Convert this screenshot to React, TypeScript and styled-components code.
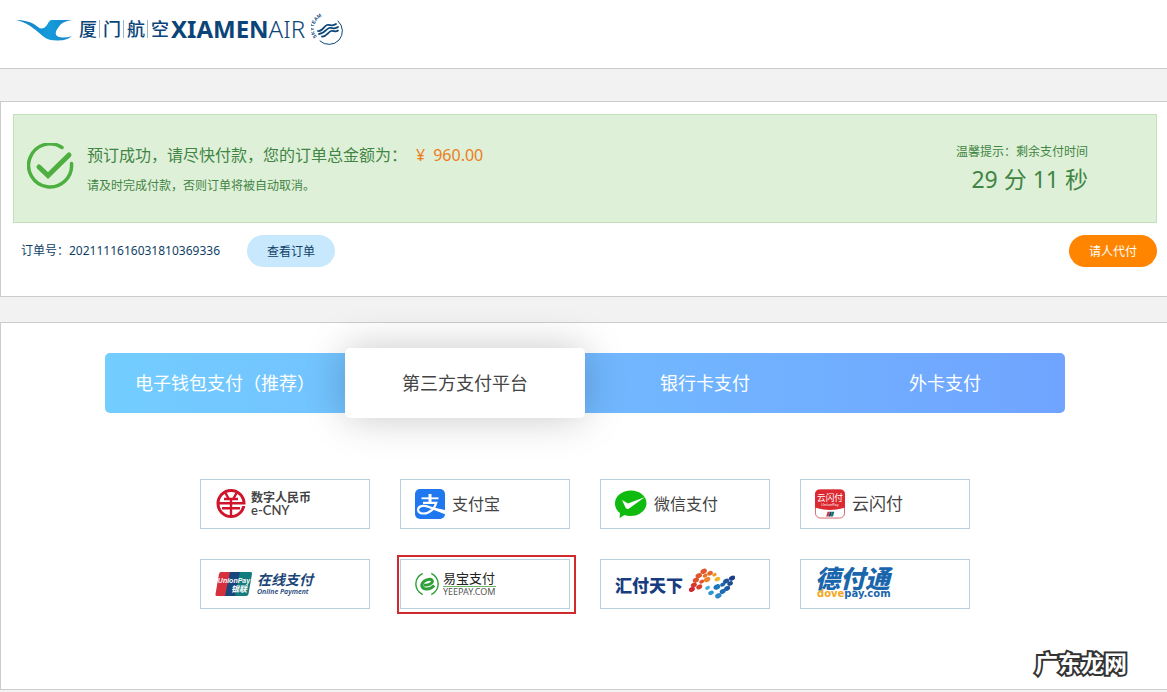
import React, { useState } from "react";
import styled, { createGlobalStyle, css } from "styled-components";

const GlobalStyle = createGlobalStyle`
  * { box-sizing: border-box; }
  body {
    margin: 0;
    background: #f2f2f2;
    color: #0f3f66;
    font-family: "Noto Sans", "Noto Sans CJK SC", sans-serif;
    font-size: 12px;
    line-height: 18px;
  }
  button { font-family: inherit; cursor: pointer; }
`;

const navy = "#0b4578";

const Header = styled.header`
  display: flex;
  align-items: flex-start;
  height: 69px;
  padding: 12px 16px;
  background: #fff;
  border-bottom: 1px solid #ccc;
`;

const Brand = styled.a`
  display: flex;
  align-items: center;
  height: 34px;
  color: ${navy};
  text-decoration: none;
`;

const BrandName = styled.span`
  display: flex;
  font-size: 18px;
  font-weight: 500;
  line-height: 18px;
`;

const BrandGlyph = styled.span`
  padding: 0 2px;
  & + & { border-left: 1px solid #9fb4c8; padding-left: 3px; }
`;

const BrandLatin = styled.span`
  font-family: "Noto Sans", sans-serif;
  font-size: 24px;
  line-height: 34px;
  font-weight: 300;
  margin-right: 6px;
  strong { font-weight: 700; }
`;

const Panel = styled.section`
  background: #fff;
  border: 1px solid #ccc;
  border-right: 0;
`;

const OrderPanel = styled(Panel)`
  margin-top: 32px;
  padding: 12px 10px 29px 12px;
`;

const Notice = styled.div`
  display: flex;
  align-items: center;
  height: 109px;
  padding: 0 68px 4px 13px;
  background: #dff0d8;
  border: 1px solid #c3dfbb;
  color: #3f8544;
`;

const NoticeText = styled.div`
  flex: 1;
  margin-left: 12px;
  padding-top: 4px;
`;

const NoticeTitle = styled.p`
  margin: 0 0 10px;
  font-size: 16px;
  line-height: 24px;
`;

const Price = styled.span`
  margin-left: 9px;
  color: #ec7d1c;
  span { margin-right: 8px; }
`;

const NoticeHint = styled.p`
  margin: 0;
`;

const Countdown = styled.div`
  padding-top: 6px;
  text-align: right;
`;

const Clock = styled.div`
  font-size: 23px;
  line-height: 36px;
`;

const OrderRow = styled.div`
  display: flex;
  align-items: center;
  margin-top: 12px;
  padding-left: 8px;
`;

const Pill = styled.button<{ $primary?: boolean }>`
  width: 88px;
  height: 32px;
  padding: 0;
  border: 0;
  border-radius: 16px;
  font-size: 12px;
  background: ${(p) => (p.$primary ? "#ff8500" : "#c7e8fd")};
  color: ${(p) => (p.$primary ? "#fff" : "#0f3f66")};
  margin-left: ${(p) => (p.$primary ? "auto" : "27px")};
`;

const PayPanel = styled(Panel)`
  position: relative;
  margin-top: 25px;
  margin-bottom: 2px;
  padding: 30px 0 80px 2px;
`;

const Tabs = styled.div`
  display: flex;
  align-items: center;
  max-width: 960px;
  height: 60px;
  margin: 0 auto;
  border-radius: 5px;
  background: linear-gradient(90deg, #73cdff, #70a4ff);
`;

const Tab = styled.button<{ $active: boolean }>`
  flex: 1;
  height: 60px;
  padding: 0;
  border: 0;
  background: none;
  color: #fff;
  font-size: 18px;
  line-height: 24px;
  ${(p) =>
    p.$active &&
    css`
      height: 70px;
      background: #fff;
      color: #444;
      border-radius: 5px;
      box-shadow: 0 0 40px rgba(0, 0, 0, 0.22);
    `}
`;

const Methods = styled.div`
  display: grid;
  grid-template-columns: repeat(auto-fit, 170px);
  gap: 30px;
  justify-content: center;
  max-width: 770px;
  margin: 66px auto 0;
`;

const Method = styled.button<{ $marked?: boolean }>`
  position: relative;
  display: flex;
  align-items: center;
  gap: 4px;
  height: 50px;
  padding: 0 0 0 14px;
  background: #fff;
  border: 1px solid #b9cfdb;
  text-align: left;
  ${(p) =>
    p.$marked &&
    css`
      &::after {
        content: "";
        position: absolute;
        inset: -5px -7px -6px -4px;
        border: 2px solid #cf2a2c;
      }
    `}
`;

const Label = styled.span<{ $size: number }>`
  padding-left: 3px;
  font-size: ${(p) => p.$size}px;
  line-height: 24px;
  color: #444;
`;

const Stack = styled.span`
  display: flex;
  flex-direction: column;
`;

const CnyName = styled.span`
  font-size: 12px;
  line-height: 12px;
  font-weight: 700;
  color: #444;
`;

const CnyLatin = styled.span`
  font-size: 13px;
  line-height: 12px;
  font-weight: 600;
  font-family: Lato, sans-serif;
  color: #444;
`;

const OnlineName = styled.span`
  font-size: 14px;
  line-height: 15px;
  font-weight: 700;
  font-style: italic;
  color: #1c4678;
`;

const OnlineLatin = styled.span`
  font-size: 7px;
  line-height: 9px;
  font-weight: 600;
  font-style: italic;
  color: #1c4678;
`;

const YeeName = styled.span`
  font-size: 13px;
  line-height: 15px;
  color: #222;
  border-bottom: 1px solid #6ab56b;
`;

const YeeLatin = styled.span`
  font-size: 9px;
  line-height: 10px;
  color: #555;
`;

const HuifuName = styled.span`
  padding-top: 3px;
  font-size: 17px;
  line-height: 24px;
  font-weight: 900;
  color: #173d80;
`;

const DoveName = styled.span`
  font-size: 25px;
  line-height: 20px;
  font-weight: 900;
  font-style: italic;
  color: #1a66ad;
`;

const DoveLatin = styled.span`
  padding-left: 2px;
  font-family: "DejaVu Sans", sans-serif;
  font-size: 10px;
  line-height: 12px;
  font-weight: 700;
  color: #1a66ad;
  em { color: #f2a81d; font-style: normal; }
`;

const Watermark = styled.span`
  position: absolute;
  right: 40px;
  bottom: 10px;
  font-size: 23px;
  line-height: 32px;
  font-weight: 700;
  color: #fff;
  -webkit-text-stroke: 4px #333;
  paint-order: stroke fill;
`;

const EgretMark = () => (
  <svg width="61" height="34" viewBox="0 0 61 34" aria-hidden="true">
    <defs>
      <linearGradient id="egret" x1="0" x2="1">
        <stop offset="0" stopColor="#127dc0" />
        <stop offset="0.6" stopColor="#159bdc" />
        <stop offset="1" stopColor="#1685c6" />
      </linearGradient>
    </defs>
    <path
      d="M0 8C9 8 16 10 22 15C25 17.500 28 17 31 13C33 10 33 8 37 8H56C49 9 45 11 42 16C38 21 39 25.500 47 25.500C50 25.500 53 25 56 24C51 28 46 28.500 41 28.500C31 28.500 28 25 22 20C15 14 9 10 0 8Z"
      fill="url(#egret)"
    />
  </svg>
);

const SkyTeamMark = () => (
  <svg width="34" height="36" viewBox="0 0 34 36" aria-hidden="true">
    <defs>
      <path id="ring" d="M6 26A11.500 11.500 0 0 1 26 9" />
    </defs>
    <text fontSize="5" fontWeight="700" fill={navy} fontFamily="Liberation Sans, sans-serif">
      <textPath href="#ring">SKYTEAM</textPath>
    </text>
    <g fill="none" stroke={navy} strokeLinecap="round">
      <path d="M27 10A13 13 0 0 1 9 30" strokeWidth="1" />
      <path d="M7 20C11 21 13 15 16 14S21 16 25 13" strokeWidth="1.800" />
      <path d="M8 23C13 23 15 18 18 17S23 19 27 16" strokeWidth="1.800" />
      <path d="M11 25.500C15 26 17 21 20 20S24 22 27 19.500" strokeWidth="1.800" />
    </g>
  </svg>
);

const SuccessMark = () => (
  <svg width="48" height="48" viewBox="0 0 48 48" aria-hidden="true">
    <g fill="none" stroke="#4caf3f" strokeLinecap="round">
      <path d="M35 4.500A21.500 21.500 0 1 0 44.500 20.500" strokeWidth="3.500" />
      <path d="M12 24L21 32.500L42 12" strokeWidth="5" />
    </g>
  </svg>
);

const CnyMark = () => (
  <svg width="32" height="30" viewBox="0 0 32 30" aria-hidden="true">
    <circle cx="16" cy="14.500" r="13" fill="none" stroke="#d0142c" strokeWidth="3" />
    <g fill="none" stroke="#d0142c" strokeWidth="2.400">
      <path d="M10.500 4L13.500 9.500M21.500 4L18.500 9.500" />
      <path d="M9 10H23M2 14.300H30M7 19.300H25M16 10V26" />
    </g>
    <path d="M27 16.300H31" stroke="#fff" strokeWidth="1.500" />
  </svg>
);

const AlipayMark = () => (
  <svg width="30" height="30" viewBox="0 0 30 30" aria-hidden="true">
    <rect width="30" height="30" rx="5" fill="#1f78f0" />
    <g fill="none" stroke="#fff">
      <path d="M6.500 9.300H23.500" strokeWidth="1.900" />
      <path d="M15 5V13.500" strokeWidth="3" />
      <path d="M8 13.800H21.300C20 19 15 24.500 8.500 24.500C4 24.500 2.500 22 3.300 19.500C4.500 16.500 9.500 16 14 18L30 24" strokeWidth="2.200" />
    </g>
    <path d="M16 18L30 21V25L18 20Z" fill="#fff" />
  </svg>
);

const WechatMark = () => (
  <svg width="32" height="30" viewBox="1 0 32 30" aria-hidden="true">
    <path d="M17 1.500C25.500 1.500 32.500 7 32.500 14S25.500 27 17 27C14.500 27 12.500 26.600 10.500 26L5.500 29L6 24C2.500 21.500 1 18 1 14.500C1 7 8 1.500 17 1.500Z" fill="#10bb10" />
    <path d="M8 11L14 14.500L31 8L15 19.500C13.500 20.500 12.500 20 11.500 18.500Z" fill="#fff" />
  </svg>
);

const QuickPassMark = () => (
  <svg width="30" height="30" viewBox="0 0 31 30" aria-hidden="true">
    <rect x="0.500" y="0.500" width="30" height="29" rx="5" fill="#fff" stroke="#d5666a" />
    <path d="M5 0H26Q31 0 31 5V18.500Q15.500 24 0 18.500V5Q0 0 5 0Z" fill="#dc2830" />
    <text x="15.500" y="12" textAnchor="middle" fontSize="9" fill="#fff" fontFamily="Noto Sans CJK SC, sans-serif">云闪付</text>
    <text x="15.500" y="17.500" textAnchor="middle" fontSize="4" fill="#fff" fontFamily="Noto Sans, sans-serif">UnionPay</text>
    <path d="M13 23H15.500L14 28H11.500Z" fill="#d8343c" />
    <path d="M15.500 23H17.500L16 28H14Z" fill="#17406e" />
    <path d="M17.500 23H20L18.500 28H16Z" fill="#17716e" />
  </svg>
);

const UnionPayMark = () => (
  <svg width="38" height="26" viewBox="0 0 38 26" aria-hidden="true">
    <path d="M6 1H16L11 25H2Q0 25 0.500 23L4 3Q4.500 1 6 1Z" fill="#d5303b" />
    <path d="M15 1H26L21 25H10Z" fill="#17477d" />
    <path d="M25 1H35.500Q37.500 1 37 3L33.500 23Q33 25 31 25H20Z" fill="#137c7c" />
    <text x="19" y="12" textAnchor="middle" fontSize="7" fontWeight="700" fontStyle="italic" fill="#fff" fontFamily="Liberation Sans, sans-serif">UnionPay</text>
    <text x="24" y="21" textAnchor="middle" fontSize="8" fontWeight="700" fontStyle="italic" fill="#fff" fontFamily="Noto Sans CJK SC, sans-serif">银联</text>
  </svg>
);

const YeepayMark = () => (
  <svg width="24" height="26" viewBox="0 0 25 26" aria-hidden="true">
    <g fill="none" stroke="#2f9f3a">
      <path d="M8 2C-1.500 7 -1.500 19 8 24" strokeWidth="1.500" />
      <path d="M17 2C26.500 7 26.500 19 17 24" strokeWidth="1.500" />
      <path d="M9 14C14 15 19 12 18 9.500C16.500 6.500 8 9 7 14C6.500 19 15 20 20 14.500" strokeWidth="3" />
    </g>
  </svg>
);

const huifuDots: [number, number, number, string][] = [
  [16, 3, 3.4, "#e2562b"], [22.5, 5, 3, "#e2662b"], [11, 7.5, 3.4, "#e0552b"], [17.5, 7.5, 2.6, "#e8702a"],
  [8, 12, 3.3, "#e0502b"], [14, 13.5, 2.6, "#e2562b"], [19.5, 11.5, 3.4, "#ee8429"],
  [6, 17, 3.2, "#d8352c"], [11.5, 19, 3.2, "#dd3c2b"], [4, 21.5, 3.2, "#cf2830"],
  [27, 6.5, 2.4, "#f09a28"], [30, 11, 3, "#f0b62a"], [20, 20, 2.6, "#45aee0"],
  [23.5, 25, 3, "#2f95d2"], [29.5, 19, 3.6, "#1b78bd"], [31, 28, 3.4, "#2b88c9"],
  [35.5, 16.5, 2.8, "#1d66ae"], [39, 13, 3.2, "#1c5399"], [45, 10, 3.4, "#1b3f86"],
  [43, 15.5, 3, "#1c4b92"], [40, 20.5, 3.2, "#1c5ba4"], [35.5, 23.5, 3.2, "#1f6cb4"],
];

const HuifuMark = () => (
  <svg width="48" height="32" viewBox="-1 0 49 32" aria-hidden="true">
    {huifuDots.map(([x, y, r, fill]) => (
      <ellipse key={`${x}-${y}`} cx={x} cy={y} rx={r} ry={r * 0.72} fill={fill} transform={`rotate(-25 ${x} ${y})`} />
    ))}
  </svg>
);

const tabs = ["电子钱包支付（推荐）", "第三方支付平台", "银行卡支付", "外卡支付"];

export default function App() {
  const [active, setActive] = useState(1);

  return (
    <>
      <GlobalStyle />
      <Header>
        <Brand href="#">
          <EgretMark />
          <BrandName>
            {["厦", "门", "航", "空"].map((c) => (
              <BrandGlyph key={c}>{c}</BrandGlyph>
            ))}
          </BrandName>
          <BrandLatin>
            <strong>XIAMEN</strong>AIR
          </BrandLatin>
          <SkyTeamMark />
        </Brand>
      </Header>
      <main>
        <OrderPanel>
          <Notice>
            <SuccessMark />
            <NoticeText>
              <NoticeTitle>
                预订成功，请尽快付款，您的订单总金额为：
                <Price>
                  <span>¥</span>960.00
                </Price>
              </NoticeTitle>
              <NoticeHint>请及时完成付款，否则订单将被自动取消。</NoticeHint>
            </NoticeText>
            <Countdown>
              温馨提示：剩余支付时间
              <Clock>29 分 11 秒</Clock>
            </Countdown>
          </Notice>
          <OrderRow>
            <span>订单号：2021111616031810369336</span>
            <Pill type="button">查看订单</Pill>
            <Pill type="button" $primary>请人代付</Pill>
          </OrderRow>
        </OrderPanel>
        <PayPanel>
          <Tabs role="tablist">
            {tabs.map((name, i) => (
              <Tab key={name} type="button" role="tab" aria-selected={i === active} $active={i === active} onClick={() => setActive(i)}>
                {name}
              </Tab>
            ))}
          </Tabs>
          <Methods>
            <Method type="button">
              <CnyMark />
              <Stack>
                <CnyName>数字人民币</CnyName>
                <CnyLatin>e-CNY</CnyLatin>
              </Stack>
            </Method>
            <Method type="button">
              <AlipayMark />
              <Label $size={16}>支付宝</Label>
            </Method>
            <Method type="button">
              <WechatMark />
              <Label $size={16}>微信支付</Label>
            </Method>
            <Method type="button">
              <QuickPassMark />
              <Label $size={17}>云闪付</Label>
            </Method>
            <Method type="button">
              <UnionPayMark />
              <Stack>
                <OnlineName>在线支付</OnlineName>
                <OnlineLatin>Online Payment</OnlineLatin>
              </Stack>
            </Method>
            <Method type="button" $marked>
              <YeepayMark />
              <Stack>
                <YeeName>易宝支付</YeeName>
                <YeeLatin>YEEPAY.COM</YeeLatin>
              </Stack>
            </Method>
            <Method type="button">
              <HuifuName>汇付天下</HuifuName>
              <HuifuMark />
            </Method>
            <Method type="button">
              <Stack>
                <DoveName>德付通</DoveName>
                <DoveLatin>
                  <em>dove</em>pay.com
                </DoveLatin>
              </Stack>
            </Method>
          </Methods>
          <Watermark>广东龙网</Watermark>
        </PayPanel>
      </main>
    </>
  );
}
